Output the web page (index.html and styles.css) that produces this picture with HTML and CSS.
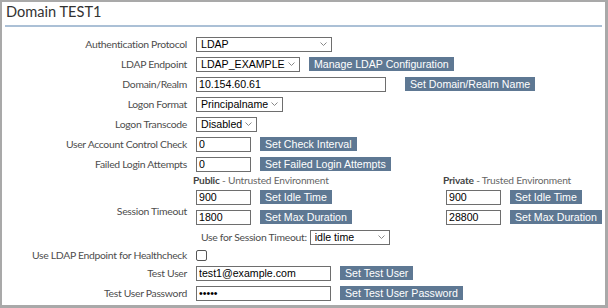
FILE: index.html
```html
<!DOCTYPE html>
<html>
<head>
  <title>Domain TEST1</title>
  <link rel="stylesheet" href="styles.css">
</head>
<body>
  <div class="panel">
    <div class="panel-title">Domain TEST1</div>
    <div class="form">
      <div class="label">Authentication Protocol</div>
      <div class="field">
        <span class="select sel-protocol">
          <select><option>LDAP</option></select>
          <svg viewBox="0 0 7 4"><polyline points="0.5,0.5 3.5,3.5 6.5,0.5"/></svg>
        </span>
      </div>

      <div class="label">LDAP Endpoint</div>
      <div class="field">
        <span class="select sel-endpoint">
          <select><option>LDAP_EXAMPLE</option></select>
          <svg viewBox="0 0 7 4"><polyline points="0.5,0.5 3.5,3.5 6.5,0.5"/></svg>
        </span>
        <button type="button" class="btn">Manage LDAP Configuration</button>
      </div>

      <div class="label">Domain/Realm</div>
      <div class="field">
        <input type="text" class="text txt-domain" value="10.154.60.61">
        <button type="button" class="btn btn-far">Set Domain/Realm Name</button>
      </div>

      <div class="label">Logon Format</div>
      <div class="field">
        <span class="select sel-format">
          <select><option>Principalname</option></select>
          <svg viewBox="0 0 7 4"><polyline points="0.5,0.5 3.5,3.5 6.5,0.5"/></svg>
        </span>
      </div>

      <div class="label">Logon Transcode</div>
      <div class="field">
        <span class="select sel-transcode">
          <select><option>Disabled</option></select>
          <svg viewBox="0 0 7 4"><polyline points="0.5,0.5 3.5,3.5 6.5,0.5"/></svg>
        </span>
      </div>

      <div class="label">User Account Control Check</div>
      <div class="field">
        <input type="text" class="text txt-small" value="0">
        <button type="button" class="btn">Set Check Interval</button>
      </div>

      <div class="label">Failed Login Attempts</div>
      <div class="field">
        <input type="text" class="text txt-small" value="0">
        <button type="button" class="btn">Set Failed Login Attempts</button>
      </div>

      <div class="label">Session Timeout</div>
      <div class="session">
        <div class="env-head"><b>Public</b> - Untrusted Environment</div>
        <div class="env-head"><b>Private</b> - Trusted Environment</div>

        <div class="field">
          <input type="text" class="text txt-small" value="900">
          <button type="button" class="btn">Set Idle Time</button>
        </div>
        <div class="field">
          <input type="text" class="text txt-small" value="900">
          <button type="button" class="btn">Set Idle Time</button>
        </div>

        <div class="field">
          <input type="text" class="text txt-small" value="1800">
          <button type="button" class="btn">Set Max Duration</button>
        </div>
        <div class="field">
          <input type="text" class="text txt-small" value="28800">
          <button type="button" class="btn">Set Max Duration</button>
        </div>

        <div class="field use-for">
          <span>Use for Session Timeout:</span>
          <span class="select sel-usefor">
            <select><option>idle time</option></select>
            <svg viewBox="0 0 7 4"><polyline points="0.5,0.5 3.5,3.5 6.5,0.5"/></svg>
          </span>
        </div>
      </div>

      <div class="label">Use LDAP Endpoint for Healthcheck</div>
      <div class="field field-check">
        <input type="checkbox" class="check">
      </div>

      <div class="label">Test User</div>
      <div class="field">
        <input type="text" class="text txt-user" value="test1@example.com">
        <button type="button" class="btn">Set Test User</button>
      </div>

      <div class="label">Test User Password</div>
      <div class="field">
        <input type="password" class="text txt-user" value="abcde">
        <button type="button" class="btn">Set Test User Password</button>
      </div>
    </div>
  </div>
</body>
</html>
```

FILE: styles.css
```css
body {
  margin: 0;
  font-family: Lato, "Liberation Sans", sans-serif;
}

.panel {
  width: 608px;
  height: 308px;
  box-sizing: border-box;
  border-style: solid;
  border-color: #a9a9a9;
  border-width: 2px 3px 3px 2px;
  background-color: white;
}

.panel-title {
  margin: 0 3px;
  padding: 0 1px 3px;
  line-height: 20px;
  font-size: 14.6px;
  color: #333;
  border-bottom: 2px solid #abc0d6;
}

.form {
  display: grid;
  grid-template-columns: 185px auto;
  column-gap: 9px;
  justify-content: start;
  padding-top: 7px;
}

.label {
  display: flex;
  align-items: center;
  justify-content: flex-end;
  font-size: 10.4px;
  letter-spacing: -0.3px;
  color: #4d4d4d;
  white-space: nowrap;
}

.field {
  display: flex;
  align-items: center;
  gap: 9px;
  height: 20px;
}

.field-check {
  height: 16px;
}

.text {
  box-sizing: border-box;
  height: 15px;
  margin: 0;
  padding: 0 2px;
  border: 1px solid #6e6e6e;
  border-radius: 0;
  font: 10.6px "Liberation Sans", Arial, sans-serif;
  color: #000;
}

.txt-domain {
  width: 190px;
}

.txt-small {
  width: 55px;
}

.txt-user {
  width: 135px;
}

.btn {
  height: 14px;
  margin: 0;
  padding: 0 5px;
  border: none;
  border-radius: 0;
  background-color: #5e7893;
  color: white;
  font: 10.6px "Liberation Sans", Arial, sans-serif;
  line-height: 14px;
  white-space: nowrap;
}

.btn-far {
  margin-left: 10px;
}

.select {
  position: relative;
  display: flex;
  height: 15px;
}

.select select {
  appearance: none;
  display: block;
  box-sizing: border-box;
  width: 100%;
  height: 15px;
  margin: 0;
  padding: 0 0 0 4px;
  border: 1px solid #6e6e6e;
  border-radius: 0;
  background-color: white;
  font: 10.6px "Liberation Sans", Arial, sans-serif;
  line-height: 13px;
  color: #000;
}

.select svg {
  position: absolute;
  right: 5px;
  top: 5px;
  width: 7px;
  height: 4px;
  fill: none;
  stroke: #888;
  stroke-width: 1;
}

.sel-protocol {
  width: 136px;
}

.sel-endpoint {
  width: 104px;
}

.sel-format {
  width: 87px;
}

.sel-transcode {
  width: 61px;
}

.sel-usefor {
  width: 80px;
}

.session {
  display: grid;
  grid-template-columns: 250px auto;
  margin-left: -3px;
}

.session .field {
  padding-left: 3px;
}

.env-head {
  height: 13px;
  line-height: 13px;
  font-size: 10.2px;
  letter-spacing: -0.2px;
  color: #666;
  white-space: nowrap;
}

.env-head b {
  color: #444;
}

.session .use-for {
  gap: 3px;
  padding-left: 8px;
  font-size: 10.4px;
  letter-spacing: -0.3px;
  color: #4d4d4d;
}

.check {
  appearance: none;
  width: 11px;
  height: 11px;
  margin: 0;
  border: 1px solid #555;
  border-radius: 2px;
  background-color: white;
}
```
